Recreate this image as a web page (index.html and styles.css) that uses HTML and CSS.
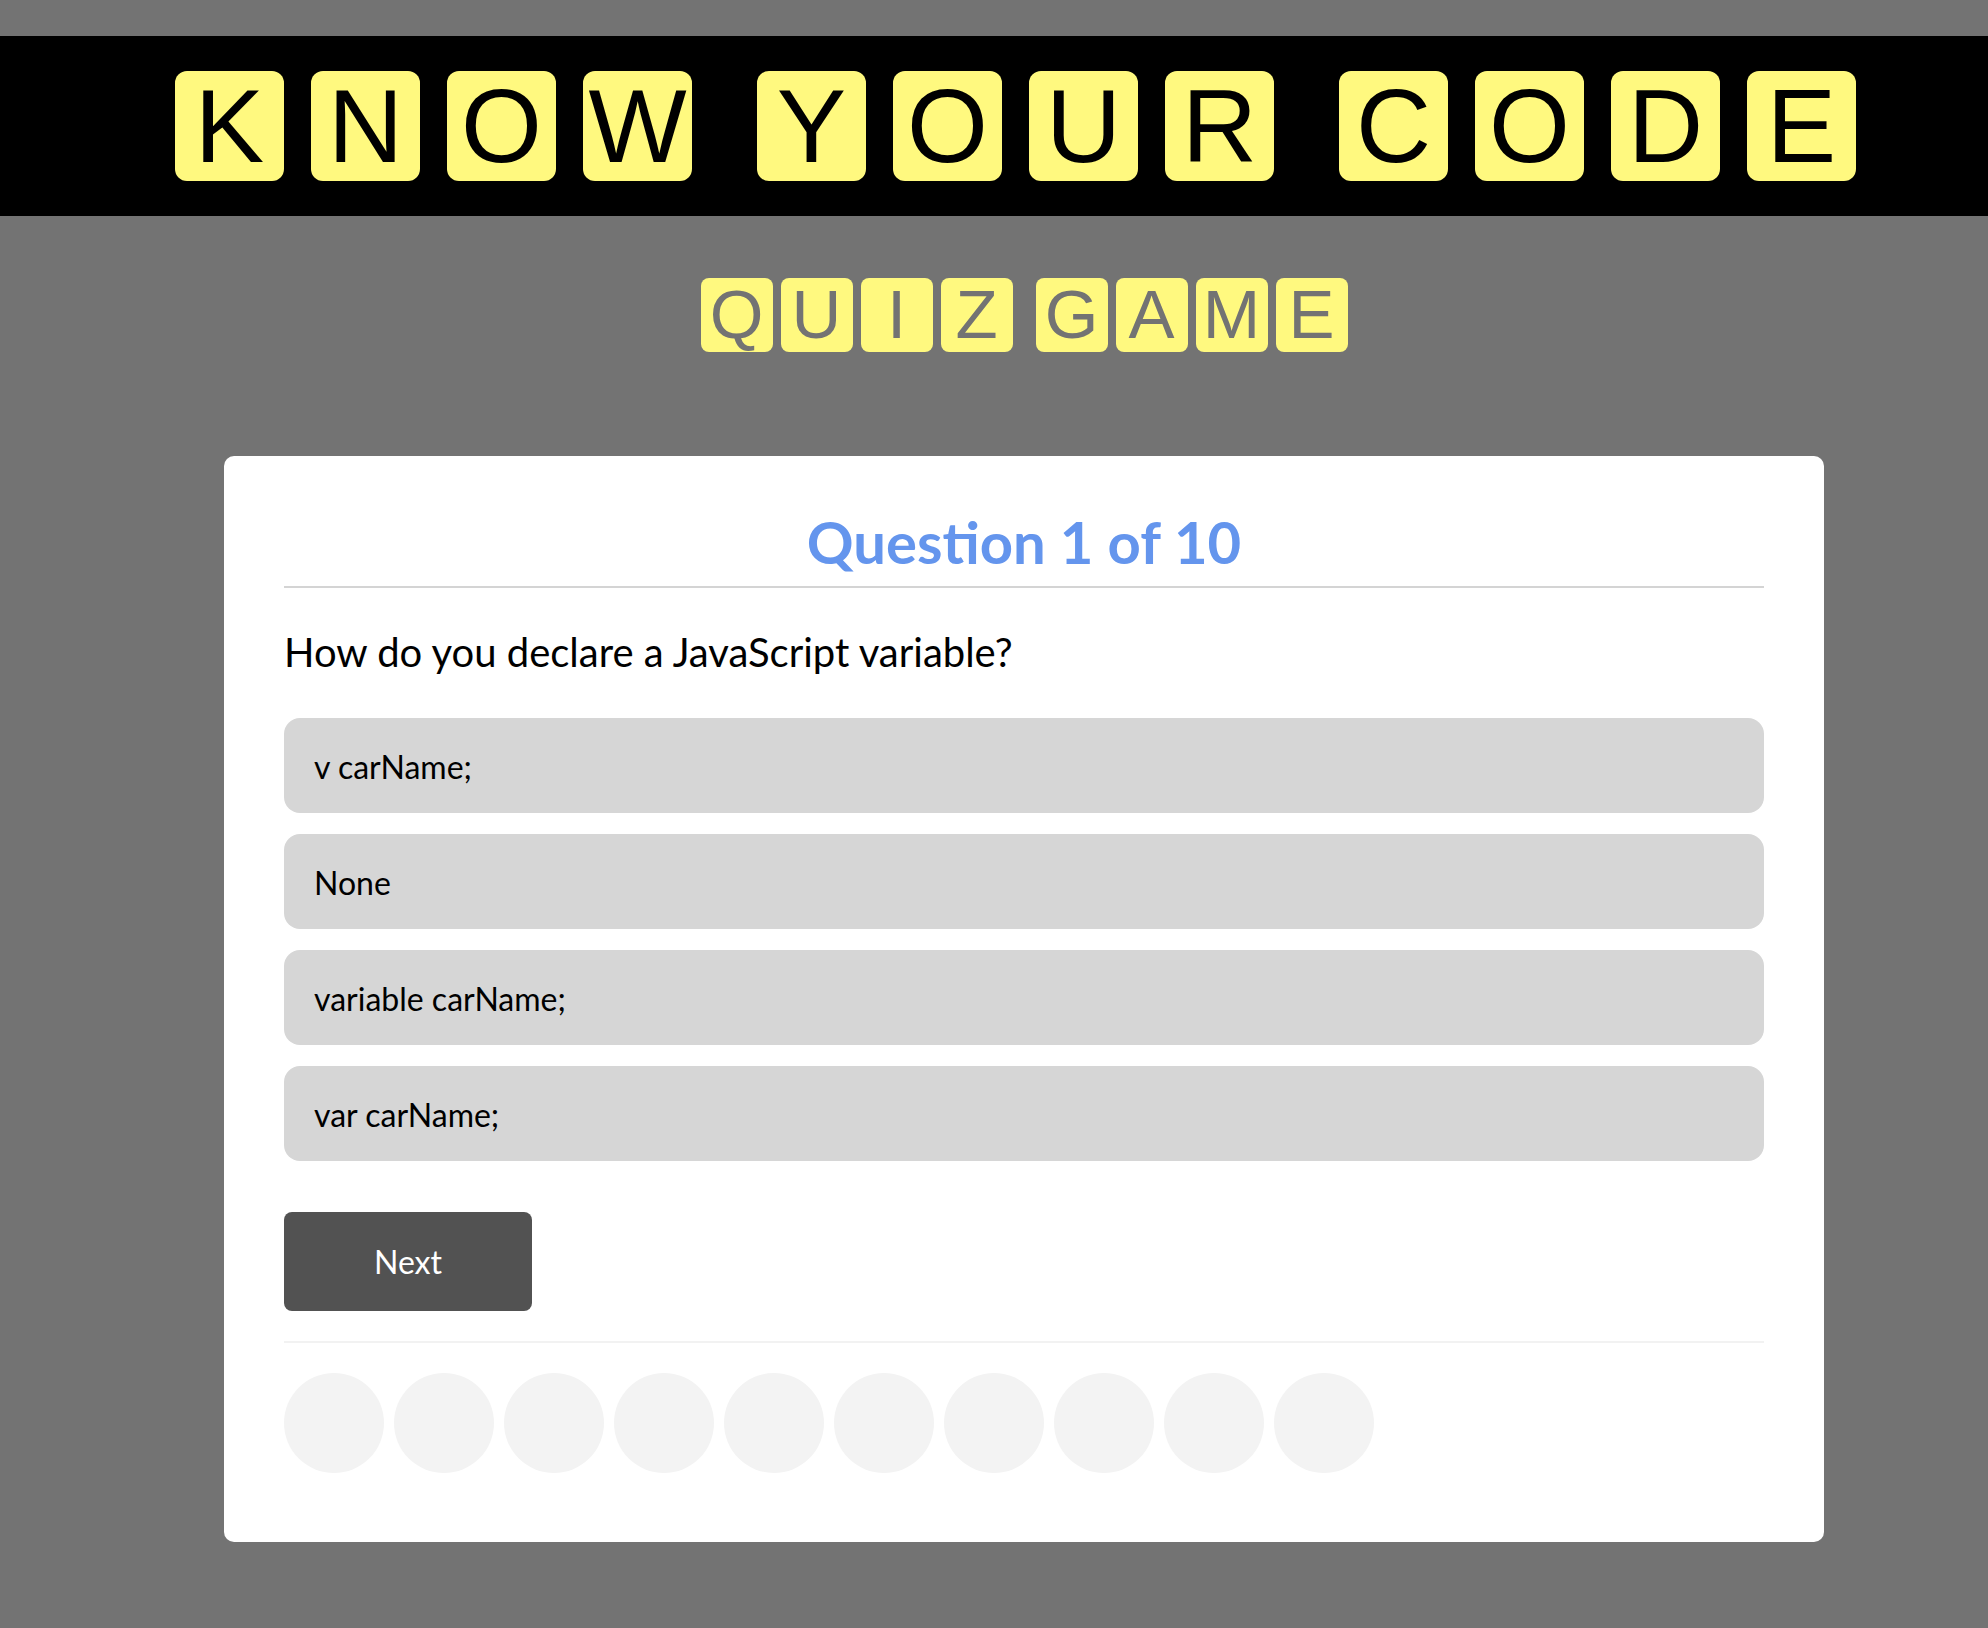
FILE: index.html
```html
<!DOCTYPE html>
<html lang="en">
<head>
<meta charset="utf-8">
<title>Know Your Code - Quiz Game</title>
<link rel="stylesheet" href="styles.css">
</head>
<body>
<header class="banner">
  <div class="banner-word">
    <span class="tile">K</span><span class="tile">N</span><span class="tile">O</span><span class="tile">W</span>
  </div>
  <div class="banner-word">
    <span class="tile">Y</span><span class="tile">O</span><span class="tile">U</span><span class="tile">R</span>
  </div>
  <div class="banner-word">
    <span class="tile">C</span><span class="tile">O</span><span class="tile">D</span><span class="tile">E</span>
  </div>
</header>

<main class="main">
  <div class="subtitle">
    <div class="sub-word">
      <span class="sub-tile">Q</span><span class="sub-tile">U</span><span class="sub-tile">I</span><span class="sub-tile">Z</span>
    </div>
    <div class="sub-word">
      <span class="sub-tile">G</span><span class="sub-tile">A</span><span class="sub-tile">M</span><span class="sub-tile">E</span>
    </div>
  </div>

  <section class="card">
    <h2 class="q-count">Question 1 of 10</h2>
    <p class="q-text">How do you declare a JavaScript variable?</p>
    <div class="answers">
      <div class="answer">v carName;</div>
      <div class="answer">None</div>
      <div class="answer">variable carName;</div>
      <div class="answer">var carName;</div>
    </div>
    <button class="next-btn" type="button">Next</button>
    <div class="progress">
      <span class="dot"></span><span class="dot"></span><span class="dot"></span><span class="dot"></span><span class="dot"></span>
      <span class="dot"></span><span class="dot"></span><span class="dot"></span><span class="dot"></span><span class="dot"></span>
    </div>
  </section>
</main>
</body>
</html>
```

FILE: styles.css
```css
* { box-sizing: border-box; }

body {
  margin: 0;
  background: #737373;
  font-family: Lato, "Liberation Sans", Arial, sans-serif;
}

.banner {
  margin-top: 36px;
  height: 180px;
  background: #000;
  display: flex;
  align-items: center;
  gap: 65px;
  padding-left: 175px;
}

.banner-word {
  display: flex;
  gap: 27px;
}

.tile {
  width: 109px;
  height: 110px;
  background: #fff97f;
  border-radius: 12px;
  color: #000;
  font-family: "Liberation Sans", Arial, sans-serif;
  font-size: 104px;
  line-height: 110px;
  text-align: center;
}

.main {
  width: 1600px;
  margin-left: 224px;
  padding-top: 62px;
  padding-bottom: 80px;
}

.subtitle {
  display: flex;
  justify-content: center;
  gap: 23px;
}

.sub-word {
  display: flex;
  gap: 8px;
}

.sub-tile {
  width: 72px;
  height: 74px;
  background: #fff97f;
  border-radius: 8px;
  color: #737373;
  font-family: "Liberation Sans", Arial, sans-serif;
  font-size: 69px;
  line-height: 74px;
  text-align: center;
}

.card {
  margin-top: 104px;
  background: #fff;
  border-radius: 10px;
  padding: 50px 60px 69px;
}

.q-count {
  margin: 0;
  color: #6495ed;
  font-size: 58px;
  font-weight: 700;
  line-height: 72px;
  text-align: center;
  padding-bottom: 8px;
  border-bottom: 2px solid #d4d4d4;
}

.q-text {
  margin: 40px 0 42px;
  font-size: 40px;
  line-height: 48px;
  color: #000;
}

.answers {
  display: flex;
  flex-direction: column;
  gap: 21px;
}

.answer {
  height: 95px;
  background: #d6d6d6;
  border-radius: 16px;
  padding: 2px 30px 0;
  display: flex;
  align-items: center;
  font-size: 32px;
  color: #000;
}

.next-btn {
  display: block;
  margin-top: 51px;
  width: 248px;
  height: 99px;
  border: none;
  border-radius: 8px;
  background: #525252;
  color: #fff;
  font-family: Lato, "Liberation Sans", Arial, sans-serif;
  font-size: 32px;
  padding: 0;
}

.progress {
  margin-top: 30px;
  border-top: 2px solid #f2f2f2;
  padding-top: 30px;
  display: flex;
  gap: 10px;
}

.dot {
  width: 100px;
  height: 100px;
  border-radius: 50%;
  background: #f3f3f3;
}
```
